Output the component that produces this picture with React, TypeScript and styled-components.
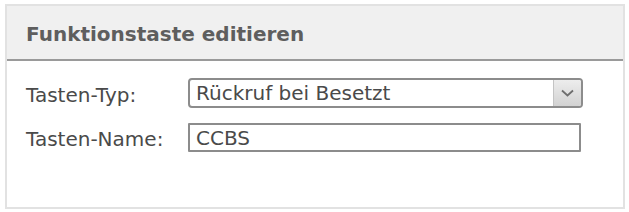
import * as React from "react";
import styled, { createGlobalStyle } from "styled-components";

const GlobalStyle = createGlobalStyle`
    html, body {
        margin: 0;
        padding: 0;
        background: #ffffff;
    }
    body {
        font-family: "DejaVu Sans", Verdana, sans-serif;
    }
`;

const Page = styled.div`
    width: 629px;
    height: 212px;
    padding: 4px 4px 3px 5px;
    box-sizing: border-box;
`;

const Panel = styled.div`
    height: 205px;
    width: 620px;
    box-sizing: border-box;
    border: 2px solid #e2e2e2;
    background: #ffffff;
    display: flex;
    flex-direction: column;
`;

const Header = styled.div`
    height: 55px;
    background: #f0f0f0;
    border-bottom: 2px solid #9a9a9a;
    display: flex;
    align-items: center;
    padding: 3px 0 0 19px;
    box-sizing: border-box;
`;

const Title = styled.span`
    font-size: 20px;
    font-weight: bold;
    color: #5e5e5e;
`;

const Form = styled.div`
    display: grid;
    grid-template-columns: 162px auto;
    justify-content: start;
    row-gap: 15px;
    padding: 17px 0 0 19px;
    align-items: center;
`;

const Label = styled.label`
    font-size: 20px;
    color: #4a4a4a;
    padding-top: 3px;
`;

const Field = styled.div<{ $width: number; $height: number; $radius: number }>`
    width: ${p => p.$width}px;
    height: ${p => p.$height}px;
    box-sizing: border-box;
    border: 2px solid #8c8c8c;
    border-radius: ${p => p.$radius}px;
    display: flex;
    align-items: center;
    background: #ffffff;
    overflow: hidden;
`;

const Value = styled.span`
    flex: 1;
    padding-left: 6px;
    font-size: 20px;
    color: #4a4a4a;
`;

const ArrowButton = styled.div`
    width: 27px;
    height: 100%;
    border-left: 1px solid #c4c4c4;
    background: linear-gradient(#ededed, #d2d2d2);
    display: flex;
    align-items: center;
    justify-content: center;
`;

export default function App() {
    return (
        <>
            <GlobalStyle />
            <Page>
                <Panel>
                    <Header>
                        <Title>Funktionstaste editieren</Title>
                    </Header>
                    <Form>
                        <Label>Tasten-Typ:</Label>
                        <Field $width={395} $height={30} $radius={4}>
                            <Value>Rückruf bei Besetzt</Value>
                            <ArrowButton>
                                <svg width="13" height="8" viewBox="0 0 13 8">
                                    <path d="M1 1.5 L6.5 6.5 L12 1.5" fill="none" stroke="#6e6e6e" strokeWidth="1.8" />
                                </svg>
                            </ArrowButton>
                        </Field>
                        <Label>Tasten-Name:</Label>
                        <Field $width={393} $height={29} $radius={1}>
                            <Value>CCBS</Value>
                        </Field>
                    </Form>
                </Panel>
            </Page>
        </>
    );
}
